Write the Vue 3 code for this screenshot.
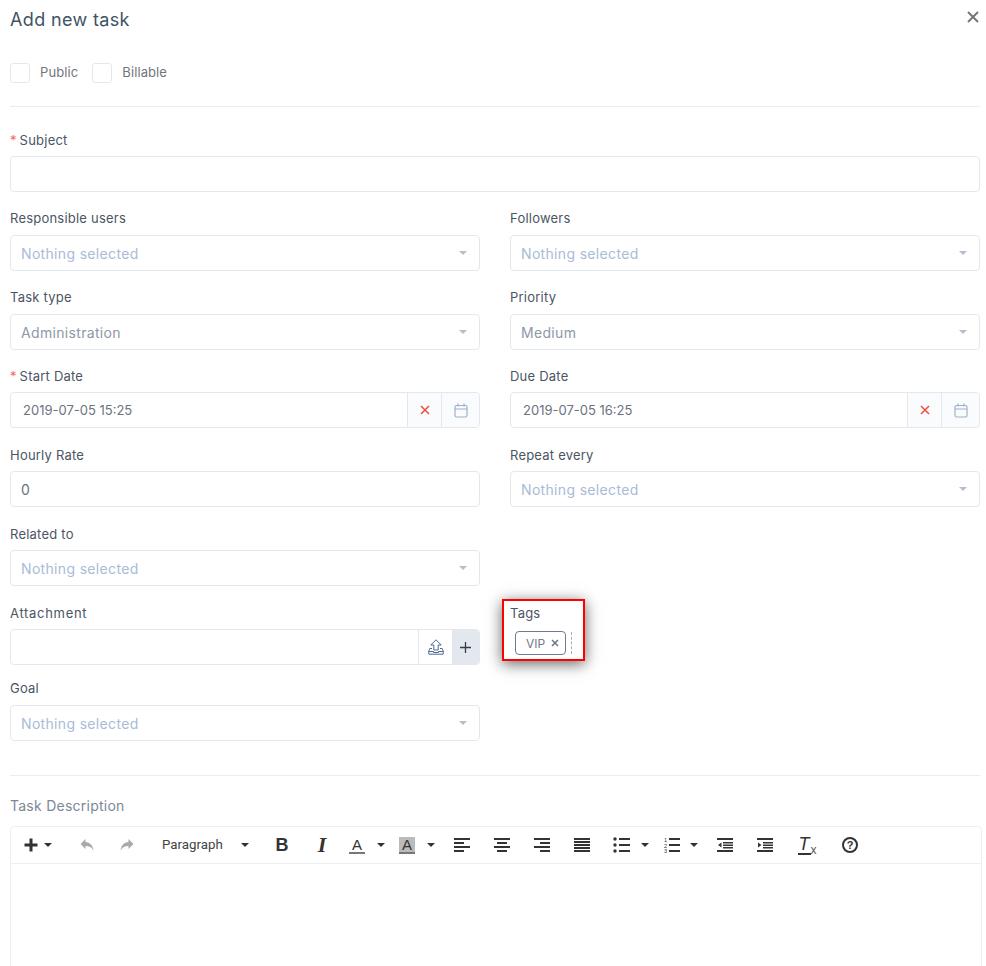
<script setup>
const emptySelect = 'Nothing selected'
const aligns = [
  { name: 'left', d: 'M0 1h16v2H0zM0 5h10v2H0zM0 9h16v2H0zM0 13h10v2H0z' },
  { name: 'center', d: 'M0 1h16v2H0zM3 5h10v2H3zM0 9h16v2H0zM3 13h10v2H3z' },
  { name: 'right', d: 'M0 1h16v2H0zM6 5h10v2H6zM0 9h16v2H0zM6 13h10v2H6z' },
  { name: 'justify', d: 'M0 1h16v2H0zM0 4h16v2H0zM0 7h16v2H0zM0 10h16v2H0zM0 13h16v2H0z' }
]
</script>

<template>
  <div class="page">
    <header class="head">
      <h1 class="title">Add new task</h1>
      <svg class="close" viewBox="0 0 12 12" width="12" height="12"><path d="M1 1l10 10M11 1L1 11" /></svg>
    </header>

    <div class="checks">
      <label class="check"><span class="box"></span><span class="check-text">Public</span></label>
      <label class="check"><span class="box"></span><span class="check-text">Billable</span></label>
    </div>
    <hr class="rule rule-top" />

    <div class="field row-subject">
      <div class="label"><span class="req">*</span> Subject</div>
      <div class="control"></div>
    </div>

    <div class="row">
      <div class="field">
        <div class="label wide">Responsible users</div>
        <div class="control select empty"><span>{{ emptySelect }}</span><i class="arrow"></i></div>
      </div>
      <div class="field">
        <div class="label wide">Followers</div>
        <div class="control select empty"><span>{{ emptySelect }}</span><i class="arrow"></i></div>
      </div>
    </div>

    <div class="row">
      <div class="field">
        <div class="label wide">Task type</div>
        <div class="control select filled"><span>Administration</span><i class="arrow"></i></div>
      </div>
      <div class="field">
        <div class="label wide">Priority</div>
        <div class="control select filled"><span>Medium</span><i class="arrow"></i></div>
      </div>
    </div>

    <div class="row loose">
      <div class="field" v-for="d in [{ l: 'Start Date', v: '2019-07-05 15:25', r: true }, { l: 'Due Date', v: '2019-07-05 16:25', r: false }]" :key="d.l">
        <div class="label"><span v-if="d.r" class="req">* </span>{{ d.l }}</div>
        <div class="control date">
          <span class="value date-value">{{ d.v }}</span>
          <span class="addon clear">
            <svg viewBox="0 0 10 10" width="10" height="10"><path d="M1 1l8 8M9 1L1 9" /></svg>
          </span>
          <span class="addon cal">
            <svg viewBox="0 0 14 15" width="14" height="15"><rect x="1" y="2.5" width="12" height="11.5" rx="1.5" /><path d="M1 6h12M4 .5v3M10 .5v3" /></svg>
          </span>
        </div>
      </div>
    </div>

    <div class="row loose">
      <div class="field">
        <div class="label">Hourly Rate</div>
        <div class="control text"><span class="value">0</span></div>
      </div>
      <div class="field">
        <div class="label">Repeat every</div>
        <div class="control select empty"><span>{{ emptySelect }}</span><i class="arrow"></i></div>
      </div>
    </div>

    <div class="row loose">
      <div class="field">
        <div class="label">Related to</div>
        <div class="control select empty"><span>{{ emptySelect }}</span><i class="arrow"></i></div>
      </div>
    </div>

    <div class="row tight">
      <div class="field">
        <div class="label attach-label">Attachment</div>
        <div class="control attach">
          <span class="grow"></span>
          <span class="addon upload">
            <svg viewBox="0 0 16 16" width="16" height="16"><path d="M8 .8L2.800 6H5.800V11H10.200V6H13.200zM4 9.500H1.800L.8 12V15.200H15.200V12L14.200 9.500H12M.8 12.500H5.500V13.500H10.500V12.500H15.200" /></svg>
          </span>
          <span class="addon plus">
            <svg viewBox="0 0 11 11" width="11" height="11"><path d="M5.500 0v11M0 5.500h11" /></svg>
          </span>
        </div>
      </div>
      <div class="field tags">
        <div class="highlight"></div>
        <div class="label">Tags</div>
        <div class="tag-line">
          <span class="tag">VIP <svg viewBox="0 0 8 8" width="8" height="8"><path d="M1 1l6 6M7 1L1 7" /></svg></span>
          <span class="tag-cursor"></span>
        </div>
      </div>
    </div>

    <div class="row">
      <div class="field">
        <div class="label wide">Goal</div>
        <div class="control select empty"><span>{{ emptySelect }}</span><i class="arrow"></i></div>
      </div>
    </div>

    <hr class="rule rule-mid" />

    <div class="desc-label">Task Description</div>
    <div class="editor">
      <div class="toolbar">
        <span class="tool t-plus">
          <svg viewBox="0 0 16 16" width="16" height="16"><path d="M6.500 1.500h3v5h5v3h-5v5h-3v-5h-5v-3h5z" /></svg><i class="caret"></i>
        </span>
        <span class="tool t40 muted"><svg viewBox="0 0 16 16" width="16" height="16"><path d="M6.500 2L1.500 7l5 5V9c3.500 0 6 1 8 4.500C14 8.500 11 5.500 6.500 5z" /></svg></span>
        <span class="tool t40 muted"><svg viewBox="0 0 16 16" width="16" height="16"><path d="M9.500 2l5 5-5 5V9c-3.500 0-6 1-8 4.500C2 8.500 5 5.500 9.500 5z" /></svg></span>
        <span class="tool t-para"><span class="para">Paragraph</span><i class="caret"></i></span>
        <span class="tool t40"><b class="g-b">B</b></span>
        <span class="tool t40"><em class="g-i">I</em></span>
        <span class="tool t-color">
          <span class="g-a">A</span><i class="caret"></i>
        </span>
        <span class="tool t-color">
          <span class="g-a hl">A</span><i class="caret"></i>
        </span>
        <span class="tool t40" v-for="a in aligns" :key="a.name">
          <svg viewBox="0 0 16 16" width="16" height="16"><path :d="a.d" /></svg>
        </span>
        <span class="tool t-list">
          <svg viewBox="0 0 17 16" width="17" height="16"><circle cx="2" cy="2" r="1.700" /><circle cx="2" cy="8" r="1.700" /><circle cx="2" cy="14" r="1.700" /><path d="M6 1h11v2H6zM6 7h11v2H6zM6 13h11v2H6z" /></svg><i class="caret"></i>
        </span>
        <span class="tool t-num">
          <svg viewBox="0 0 16 16" width="16" height="16"><text class="nums" x="0" y="5">1</text><text class="nums" x="0" y="10.500">2</text><text class="nums" x="0" y="16">3</text><path d="M5 1h11v2H5zM5 7h11v2H5zM5 13h11v2H5z" /></svg><i class="caret"></i>
        </span>
        <span class="tool t40"><svg viewBox="0 0 16 16" width="16" height="16"><path d="M0 1h16v2H0zM6 5h10v1.500H6zM6 7.500h10V9H6zM6 10h10v1.500H6zM0 13h16v2H0zM4.500 5.500v5L1 8z" /></svg></span>
        <span class="tool t40"><svg viewBox="0 0 16 16" width="16" height="16"><path d="M0 1h16v2H0zM6 5h10v1.500H6zM6 7.500h10V9H6zM6 10h10v1.500H6zM0 13h16v2H0zM1 5.500v5L4.500 8z" /></svg></span>
        <span class="tool t-clear"><span class="g-t">T</span><span class="g-x">x</span></span>
        <span class="tool t-help"><span class="g-help">?</span></span>
      </div>
      <div class="editor-body"></div>
    </div>
  </div>
</template>

<style scoped>
.page {
  box-sizing: border-box;
  height: 966px;
  overflow: hidden;
  padding: 0 6px 0 10px;
  font-family: Inter, "Liberation Sans", sans-serif;
  color: #4b5563;
  background: #fff;
}
.head {
  display: flex;
  justify-content: space-between;
  align-items: center;
  height: 40px;
  padding-right: 1px;
}
.title {
  margin: -1px 0 0;
  font-size: 18px;
  font-weight: 400;
  color: #415364;
  letter-spacing: .35px;
}
.close { margin: -6px 0 0 0; fill: none; stroke: #777; stroke-width: 2; }
.checks {
  display: flex;
  gap: 14px;
  margin-top: 23px;
  height: 20px;
  width: 970px;
}
.check {
  display: flex;
  align-items: center;
  gap: 10px;
  font-size: 13px;
  color: #71757c;
}
.check-text { margin-top: -2px; letter-spacing: .1px; }
.box {
  box-sizing: border-box;
  width: 20px;
  height: 20px;
  border: 1px solid #e4e8ee;
  border-radius: 3px;
}
.rule {
  width: 970px;
  margin: 0;
  border: 0;
  border-top: 1px solid #e9edf2;
}
.rule-top { margin-top: 23px; }
.rule-mid { margin-top: 34px; }
.row-subject { width: 970px; margin: 25px 0 18px; }
.row {
  display: grid;
  grid-template-columns: 470px 470px;
  column-gap: 30px;
  margin-bottom: 18px;
}
.row.loose { margin-bottom: 19px; }
.row.tight { margin-bottom: 15px; }
.label {
  height: 16px;
  line-height: 16px;
  margin-bottom: 8px;
  font-size: 13px;
  letter-spacing: .22px;
  color: #4b5563;
  white-space: nowrap;
}
.label.wide { margin-bottom: 9px; }
.label.attach-label { letter-spacing: .7px; }
.req { color: #f8665b; margin-right: -1px; }
.control {
  box-sizing: border-box;
  height: 36px;
  border: 1px solid #e3e8ee;
  border-radius: 4px;
  background: #fff;
  display: flex;
  align-items: center;
  font-size: 14px;
}
.select { justify-content: space-between; padding: 0 12px 0 10px; background: #fff; letter-spacing: .33px; }
.empty { color: #a9bbd6; }
.filled { color: #8d98a8; }
.arrow {
  width: 0;
  height: 0;
  border-left: 4.500px solid transparent;
  border-right: 4.500px solid transparent;
  border-top: 4.500px solid #b4bfce;
}
.value { color: #6b7280; padding-left: 12px; flex: 1; }
.text .value { padding-left: 10px; font-size: 14px; }
.date-value { font-size: 13px; }
.addon {
  display: flex;
  align-items: center;
  justify-content: center;
  height: 100%;
  border-left: 1px solid #e3e8ee;
  box-sizing: border-box;
}
.clear { width: 34px; background: #f9fbfd; }
.clear svg { fill: none; stroke: #f4493c; stroke-width: 1.500; }
.cal { width: 38px; background: #f9fbfd; border-radius: 0 4px 4px 0; }
.cal svg { fill: none; stroke: #9fb0ca; stroke-width: 1.200; }
.grow { flex: 1; }
.upload { width: 34px; }
.upload svg { fill: none; stroke: #4f6a92; stroke-width: 1; }
.plus { width: 27px; background: #e2e8ed; border-left: 0; border-radius: 0 3px 3px 0; }
.plus svg { fill: none; stroke: #333f4d; stroke-width: 1.300; }
.tags { position: relative; }
.highlight {
  position: absolute;
  left: -8px;
  top: -6px;
  width: 83px;
  height: 62px;
  box-sizing: border-box;
  border: 2px solid #f00;
  box-shadow: 0 3px 14px rgba(0, 0, 0, .6);
  pointer-events: none;
}
.tag-line { display: flex; align-items: center; height: 36px; padding-left: 5px; margin-top: -4px; }
.tag {
  box-sizing: border-box;
  display: inline-flex;
  align-items: center;
  gap: 6px;
  height: 24px;
  padding: 0 5px 0 10px;
  width: 51px;
  border: 1px solid #6f7c90;
  border-radius: 4px;
  font-size: 12px;
  color: #717a86;
}
.tag svg { fill: none; stroke: #6f7680; stroke-width: 1.500; }
.tag-cursor { height: 22px; margin-left: 5px; border-left: 1px dashed #a8adb4; }
.desc-label {
  margin-top: 21px;
  height: 17px;
  line-height: 17px;
  font-size: 14px;
  letter-spacing: .25px;
  color: #7c8897;
}
.editor {
  box-sizing: border-box;
  width: 972px;
  height: 200px;
  margin-top: 12px;
  border: 1px solid #eceef1;
  border-radius: 4px 4px 0 0;
}
.toolbar {
  display: flex;
  align-items: center;
  height: 36px;
  border-bottom: 1px solid #eceef1;
  color: #333;
}
.tool { display: flex; align-items: center; height: 100%; box-sizing: border-box; }
.tool svg { fill: currentColor; display: block; flex: none; }
.t40 { width: 40px; justify-content: center; }
.muted { color: #aaa; }
.caret {
  width: 0;
  height: 0;
  flex: none;
  border-left: 4px solid transparent;
  border-right: 4px solid transparent;
  border-top: 4px solid #333;
}
.t-plus { width: 56px; padding-left: 12px; gap: 5px; }
.t-para { width: 115px; padding-left: 15px; }
.para { width: 79px; margin-top: -2px; font: 13.300px Roboto, sans-serif; color: #444; }
.t-color { width: 50px; padding-left: 7px; gap: 12px; }
.t-list { width: 54px; padding-left: 11px; gap: 11px; }
.t-num { width: 49px; padding-left: 8px; gap: 10px; }
.g-b { font: bold 18px "Liberation Sans", sans-serif; color: #333; }
.g-i { font: italic bold 22px "Liberation Serif", serif; color: #333; }
.g-a {
  box-sizing: border-box;
  width: 16px;
  height: 17px;
  text-align: center;
  font: 15px/15px "Liberation Sans", sans-serif;
  border-bottom: 2px solid #777;
  color: #333;
}
.g-a.hl { background: #bbb; }
.nums { font: 5.500px "Liberation Sans", sans-serif; }
.t-clear { width: 44px; justify-content: center; }
.g-t {
  font: italic 18px/17px "Liberation Sans", sans-serif;
  border-bottom: 2px solid #333;
  width: 13px;
  text-align: center;
}
.g-x { font: 12px "Liberation Sans", sans-serif; color: #555; margin-top: 10px; }
.t-help { width: 42px; justify-content: center; }
.g-help {
  box-sizing: border-box;
  width: 16px;
  height: 16px;
  border: 2px solid #333;
  border-radius: 50%;
  text-align: center;
  font: bold 11px/12px "Liberation Sans", sans-serif;
}
.editor-body { height: 160px; }
</style>

<style>
html, body { margin: 0; overflow: hidden; background: #fff; }
</style>
